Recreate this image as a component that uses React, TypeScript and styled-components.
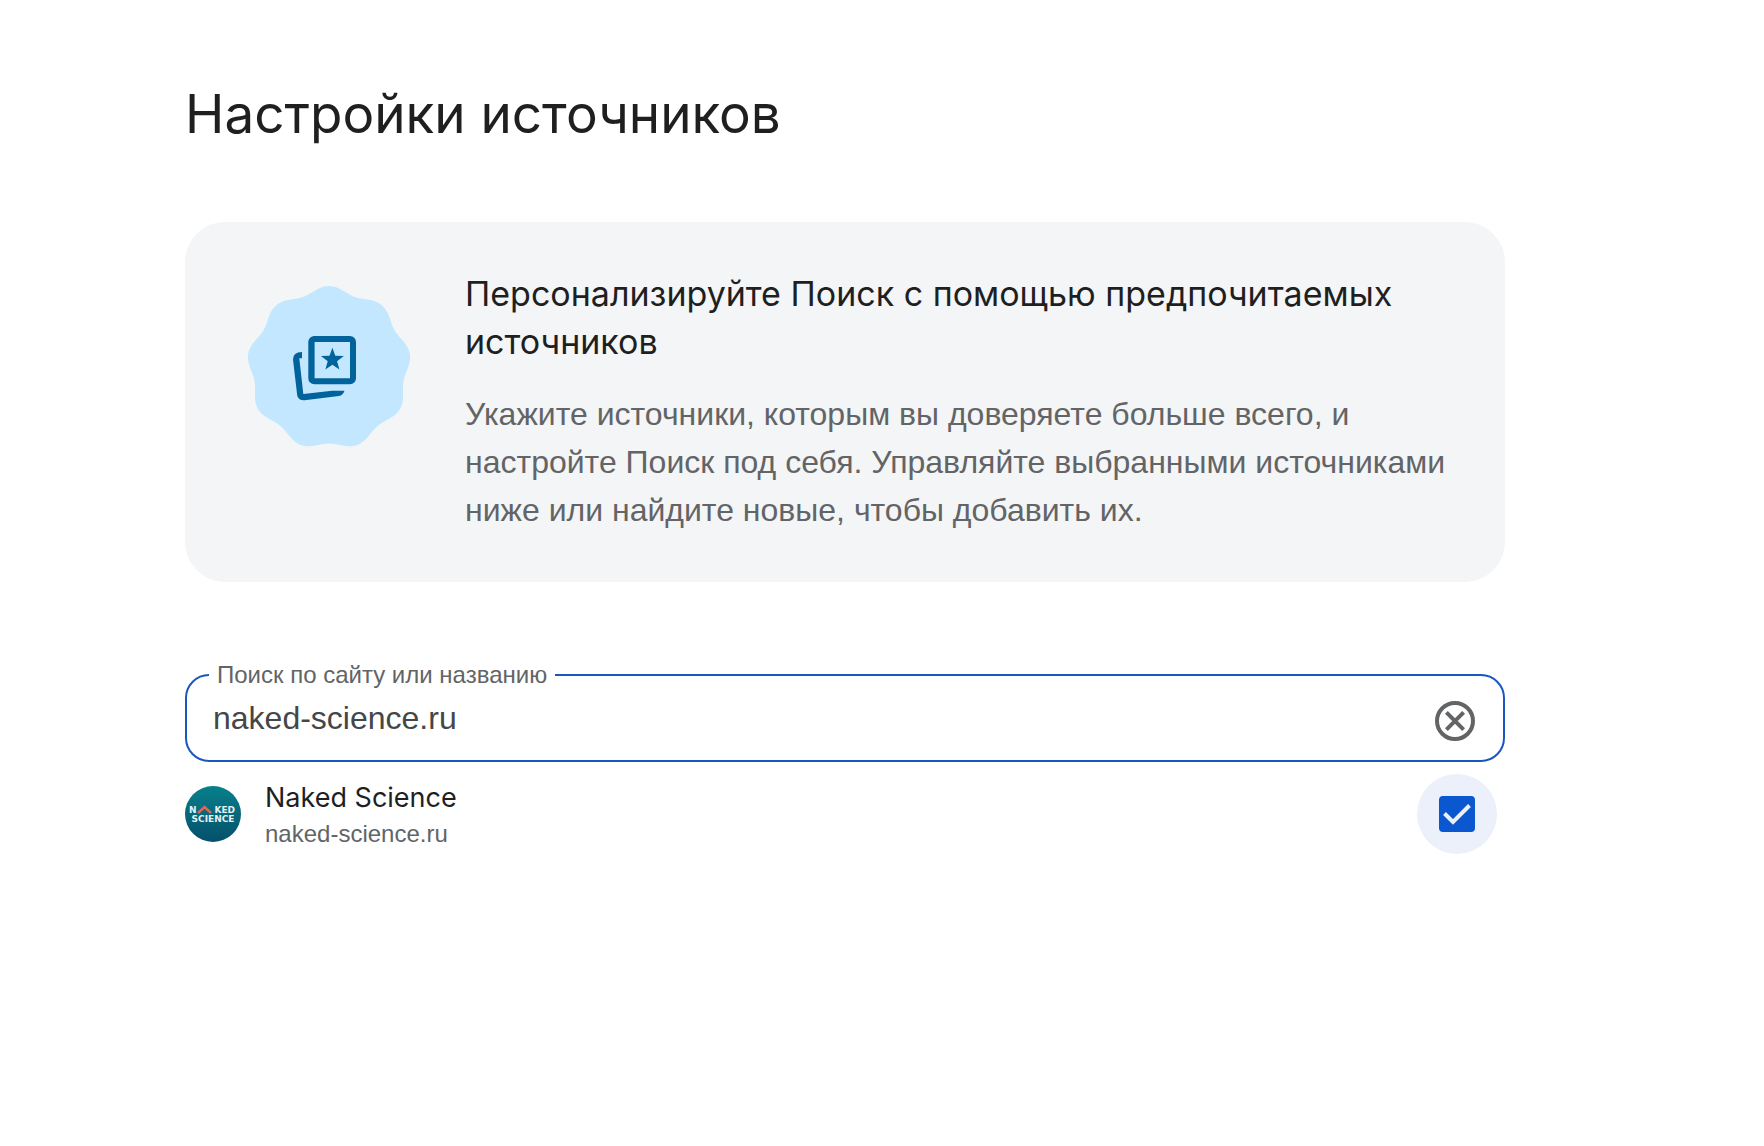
import { useRef, useState } from "react";
import styled, { createGlobalStyle } from "styled-components";

const display = `Inter, "Open Sans", sans-serif`;
const body = `"Liberation Sans", Arial, sans-serif`;

const GlobalStyle = createGlobalStyle`
  *, *::before, *::after { box-sizing: border-box; }
  body { margin: 0; background: #fff; font-family: ${body}; }
`;

const Page = styled.main`
  padding: 78px 259px 78px 185px;
`;

const Title = styled.h1`
  margin: 0 0 72px;
  font: 400 53px/72px ${display};
  color: #1f1f1f;
`;

const Banner = styled.section`
  display: flex;
  align-items: flex-start;
  gap: 56px;
  padding: 48px 48px 48px 64px;
  border-radius: 40px;
  background: #f3f5f7;
`;

const BadgeArt = styled.svg`
  flex: none;
  width: 160px;
  height: 160px;
  margin-top: 18px;
  overflow: visible;
`;

const BannerTitle = styled.h2`
  margin: 0 0 24px;
  font: 400 34px/48px ${display};
  color: #1f1f1f;
`;

const BannerText = styled.p`
  margin: 0;
  font-size: 32px;
  line-height: 48px;
  color: #636466;
`;

const Field = styled.fieldset`
  display: flex;
  align-items: center;
  min-width: 0;
  margin: 80px 0 0;
  padding: 0 24px 0 22px;
  border: 2px solid #1a56c0;
  border-radius: 24px;
`;

const FieldLabel = styled.legend`
  padding: 0 8px;
  font-size: 24px;
  line-height: 26px;
  color: #636466;
`;

const FieldInput = styled.input`
  flex: 1;
  min-width: 0;
  height: 72px;
  padding: 0 4px 12px;
  border: 0;
  outline: 0;
  background: transparent;
  font: 400 32px/40px ${body};
  color: #444648;
`;

const ClearButton = styled.button`
  flex: none;
  width: 48px;
  height: 48px;
  margin-bottom: 6px;
  padding: 0;
  border: 0;
  background: none;
  color: #636466;
  cursor: pointer;

  svg { display: block; width: 100%; height: 100%; }
`;

const SourceList = styled.ul`
  margin: 0;
  padding: 12px 0 0;
  list-style: none;
`;

const SourceRow = styled.li`
  display: flex;
  align-items: center;
  gap: 24px;
  padding-right: 8px;
`;

const Logo = styled.svg`
  flex: none;
  width: 56px;
  height: 56px;
`;

const SourceText = styled.div`
  flex: 1;
  min-width: 0;
`;

const SourceName = styled.label`
  display: block;
  font: 400 27px/40px ${display};
  color: #1f1f1f;
`;

const SourceHost = styled.div`
  font-size: 24px;
  line-height: 32px;
  color: #636466;
`;

const CheckHalo = styled.span`
  flex: none;
  display: grid;
  place-items: center;
  width: 80px;
  height: 80px;
  border-radius: 50%;
  background: #ecf0fb;

  > * { grid-area: 1 / 1; }
`;

const CheckInput = styled.input`
  appearance: none;
  width: 36px;
  height: 36px;
  margin: 0;
  border: 4px solid #0b57d0;
  border-radius: 4px;
  cursor: pointer;

  &:checked { background: #0b57d0; }
  &:not(:checked) + svg { visibility: hidden; }
`;

const CheckMark = styled.svg`
  width: 36px;
  height: 36px;
  pointer-events: none;
`;

// Nine-lobed rosette: the radius swings around its mean once per lobe.
const rosette =
  Array.from({ length: 180 }, (_, i) => {
    const a = (i * Math.PI) / 90;
    const r = 78.8 + 3.2 * Math.cos(9 * a);
    return `${i ? "L" : "M"}${(r * Math.sin(a)).toFixed(2)} ${(-r * Math.cos(a)).toFixed(2)}`;
  }).join("") + "Z";

const star =
  Array.from({ length: 10 }, (_, i) => {
    const a = (i * Math.PI) / 5;
    const r = i % 2 ? 4.9 : 12;
    return `${i ? "L" : "M"}${(3.4 + r * Math.sin(a)).toFixed(2)} ${(-8.2 - r * Math.cos(a)).toFixed(2)}`;
  }).join("") + "Z";

function SourcesBadge() {
  return (
    <BadgeArt viewBox="-80 -80 160 160" aria-hidden="true">
      <path d={rosette} fill="#c2e7ff" />
      <g fill="#00639b">
        <path
          fillRule="evenodd"
          d="M-14.7-32H21a6 6 0 0 1 6 6V10.3a6 6 0 0 1-6 6H-14.7a6 6 0 0 1-6-6V-26a6 6 0 0 1 6-6ZM-14.4-26V10.2H21V-26Z"
        />
        <path d={star} />
        <path d="M-27-16V-9.7H-29.7L-25.7 26L3 22.7H15.5Q14 27.2 10 28L-24.5 32.3Q-31 32.6-31.8 27.2L-36-8.5Q-36.2-15.6-27-16Z" />
      </g>
    </BadgeArt>
  );
}

function NakedScienceLogo() {
  return (
    <Logo viewBox="0 0 56 56" role="img" aria-label="Naked Science">
      <defs>
        <linearGradient id="logo-fill" x1="0" y1="0" x2="0" y2="1">
          <stop offset="0" stopColor="#08808c" />
          <stop offset="1" stopColor="#04506a" />
        </linearGradient>
      </defs>
      <circle cx="28" cy="28" r="28" fill="url(#logo-fill)" />
      <g fill="#e4f1f3" fontFamily="DejaVu Sans" fontWeight="700" fontSize="9">
        <text x="4" y="27">N</text>
        <text x="50" y="27" textAnchor="end">KED</text>
        <text x="28" y="36" textAnchor="middle">SCIENCE</text>
      </g>
      <path d="M13 27L19.5 21L26 27" fill="none" stroke="#e8644c" strokeWidth="2.4" />
    </Logo>
  );
}

export default function App() {
  const [query, setQuery] = useState("naked-science.ru");
  const [chosen, setChosen] = useState(true);
  const input = useRef<HTMLInputElement>(null);

  const clear = () => {
    setQuery("");
    input.current?.focus();
  };

  return (
    <>
      <GlobalStyle />
      <Page>
        <Title>Настройки источников</Title>
        <Banner>
          <SourcesBadge />
          <div>
            <BannerTitle>Персонализируйте Поиск с помощью предпочитаемых источников</BannerTitle>
            <BannerText>
              Укажите источники, которым вы доверяете больше всего, и настройте Поиск под себя.
              Управляйте выбранными источниками ниже или найдите новые, чтобы добавить их.
            </BannerText>
          </div>
        </Banner>
        <Field>
          <FieldLabel>
            <label htmlFor="source-query">Поиск по сайту или названию</label>
          </FieldLabel>
          <FieldInput
            id="source-query"
            ref={input}
            type="text"
            spellCheck={false}
            value={query}
            onChange={(e) => setQuery(e.target.value)}
          />
          <ClearButton type="button" aria-label="Очистить" onClick={clear}>
            <svg viewBox="0 0 48 48" fill="none" stroke="currentColor" strokeWidth="4">
              <circle cx="24" cy="24" r="18" />
              <path d="M15.4 15.4L32.6 32.6M32.6 15.4L15.4 32.6" />
            </svg>
          </ClearButton>
        </Field>
        <SourceList>
          <SourceRow>
            <NakedScienceLogo />
            <SourceText>
              <SourceName htmlFor="source-naked-science">Naked Science</SourceName>
              <SourceHost>naked-science.ru</SourceHost>
            </SourceText>
            <CheckHalo>
              <CheckInput
                id="source-naked-science"
                type="checkbox"
                checked={chosen}
                onChange={(e) => setChosen(e.target.checked)}
              />
              <CheckMark viewBox="0 0 36 36" fill="none" stroke="#ecf0fb" strokeWidth="4">
                <path d="M5.5 17.5L14 26L30.5 9.5" />
              </CheckMark>
            </CheckHalo>
          </SourceRow>
        </SourceList>
      </Page>
    </>
  );
}
